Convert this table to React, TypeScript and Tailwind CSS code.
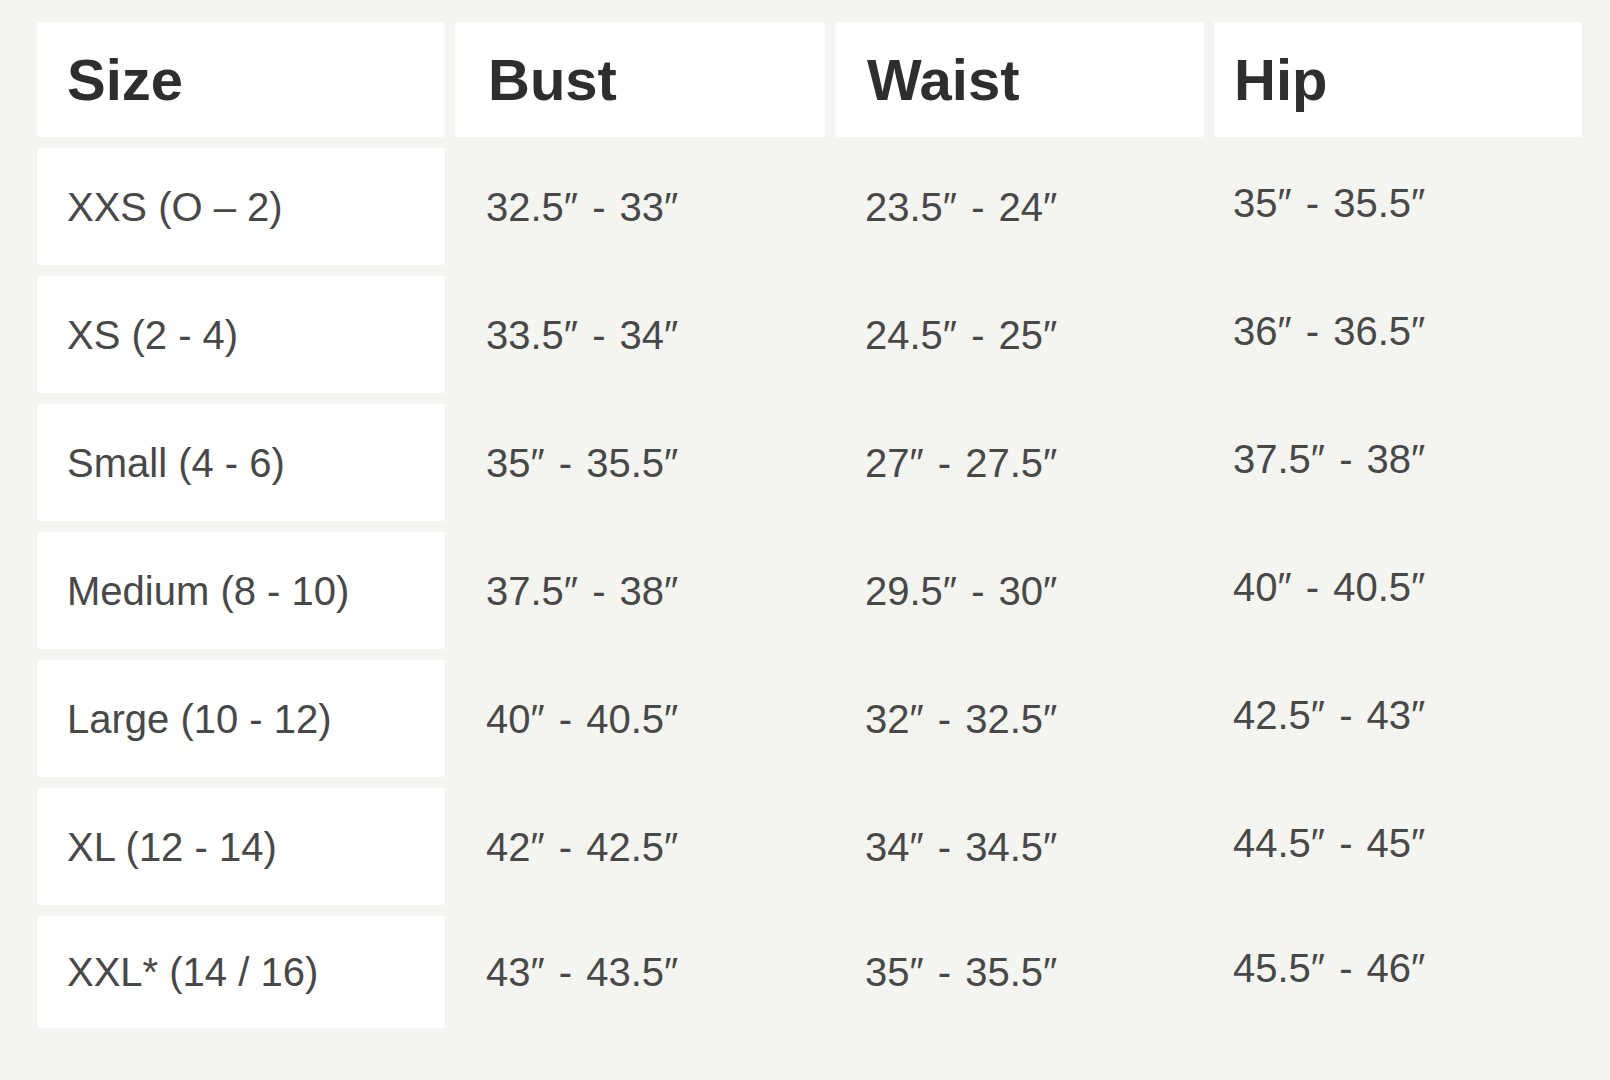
import React from 'react';

interface SizeRow {
  size: string;
  bust: string;
  waist: string;
  hip: string;
}

const rows: SizeRow[] = [
  { size: 'XXS (O – 2)', bust: '32.5″ - 33″', waist: '23.5″ - 24″', hip: '35″ - 35.5″' },
  { size: 'XS (2 - 4)', bust: '33.5″ - 34″', waist: '24.5″ - 25″', hip: '36″ - 36.5″' },
  { size: 'Small (4 - 6)', bust: '35″ - 35.5″', waist: '27″ - 27.5″', hip: '37.5″ - 38″' },
  { size: 'Medium (8 - 10)', bust: '37.5″ - 38″', waist: '29.5″ - 30″', hip: '40″ - 40.5″' },
  { size: 'Large (10 - 12)', bust: '40″ - 40.5″', waist: '32″ - 32.5″', hip: '42.5″ - 43″' },
  { size: 'XL (12 - 14)', bust: '42″ - 42.5″', waist: '34″ - 34.5″', hip: '44.5″ - 45″' },
  { size: 'XXL* (14 / 16)', bust: '43″ - 43.5″', waist: '35″ - 35.5″', hip: '45.5″ - 46″' },
];

const headCell = 'h-[115px] flex items-center bg-white rounded-[2px] text-[58px] font-bold text-[#2e2e2e] leading-none';
const bodyText = 'flex items-center text-[40px] text-[#484848] leading-none';
const measure = `${bodyText} [word-spacing:3px]`;

const App: React.FC = () => {
  return (
    <div
      className="w-[1610px] h-[1080px] bg-[#f4f5f0] pt-[22px] pl-[37px] overflow-hidden"
      style={{ fontFamily: '"Liberation Sans", Arial, sans-serif' }}
    >
      <div className="grid grid-cols-[408px_370px_369px_368px] gap-x-[10px] gap-y-[11px]">
        <div className={`${headCell} pl-[30px]`}>Size</div>
        <div className={`${headCell} pl-[33px]`}>Bust</div>
        <div className={`${headCell} pl-[32px]`}>Waist</div>
        <div className={`${headCell} pl-[20px]`}>Hip</div>

        {rows.map((row, index) => {
          const h = index === rows.length - 1 ? 'h-[112px]' : 'h-[117px]';
          return (
            <React.Fragment key={row.size}>
              <div className={`${bodyText} ${h} pl-[30px] bg-white rounded-[2px] shadow-[0_0_2px_rgba(0,0,0,0.03)]`}>
                {row.size}
              </div>
              <div className={`${measure} ${h} pl-[31px]`}>{row.bust}</div>
              <div className={`${measure} ${h} pl-[30px]`}>{row.waist}</div>
              <div className={`${measure} ${h} pl-[19px] -mt-[4px]`}>{row.hip}</div>
            </React.Fragment>
          );
        })}
      </div>
    </div>
  );
};

export default App;
